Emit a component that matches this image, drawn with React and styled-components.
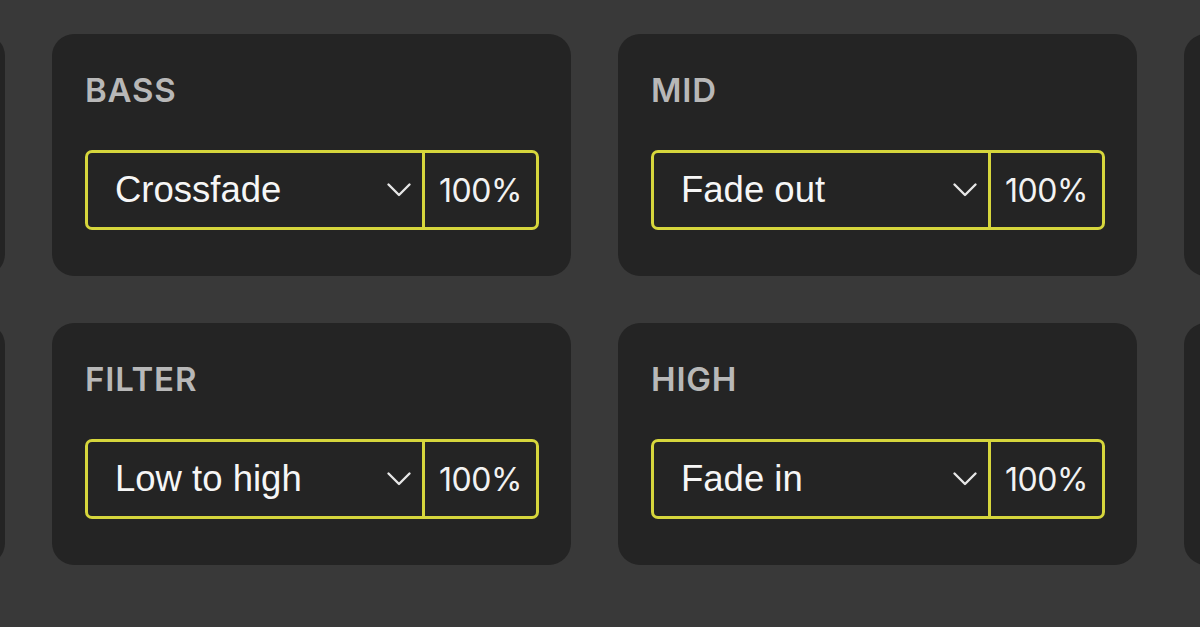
import React from "react";
import styled, { createGlobalStyle } from "styled-components";

const Global = createGlobalStyle`
  html, body { margin: 0; padding: 0; background: #393939; overflow: hidden; }
`;

const Viewport = styled.main`
  width: 1200px;
  height: 627px;
  overflow: hidden;
  background: #393939;
`;

const Grid = styled.div`
  display: grid;
  grid-template-columns: repeat(4, 519px);
  column-gap: 47px;
  row-gap: 47px;
  margin-left: -514px;
  padding-top: 34px;
`;

const Card = styled.section`
  background: #242424;
  border-radius: 22px;
  height: 242px;
  box-sizing: border-box;
  padding: 36px 32px 0 33px;
`;

const Label = styled.div`
  font-family: Inter, "Noto Sans", sans-serif;
  font-weight: 600;
  font-size: 33px;
  line-height: 40px;
  color: #b8b8b8;
  letter-spacing: 0.8px;
`;

const SelectBox = styled.div`
  margin-top: 40px;
  height: 80px;
  box-sizing: border-box;
  border: 3px solid #d6d63c;
  border-radius: 7px;
  display: flex;
  align-items: stretch;
`;

const Choice = styled.div`
  flex: 1;
  display: flex;
  align-items: center;
  padding: 0 10px 0 27px;
  border-right: 3px solid #d6d63c;
`;

const ChoiceText = styled.span`
  flex: 1;
  font-family: "Liberation Sans", Arial, sans-serif;
  font-size: 36.5px;
  color: #f6f6f6;
`;

const Chevron = styled.svg`
  width: 26px;
  height: 16px;
  display: block;
`;

const Amount = styled.div`
  width: 111px;
  display: flex;
  align-items: center;
  justify-content: center;
  font-family: Inter, "Noto Sans", sans-serif;
  font-size: 32px;
  font-weight: 400;
  color: #f2f2f2;
  letter-spacing: -0.5px;
`;

const cards = [
  null,
  { label: "BASS", value: "Crossfade" },
  { label: "MID", value: "Fade out" },
  null,
  null,
  { label: "FILTER", value: "Low to high" },
  { label: "HIGH", value: "Fade in" },
  null,
];

function Control({ label, value }) {
  return (
    <>
      <Label>{label}</Label>
      <SelectBox>
        <Choice>
          <ChoiceText>{value}</ChoiceText>
          <Chevron viewBox="0 0 26 16" fill="none">
            <path d="M2.5 2.5 L13 13 L23.5 2.5" stroke="#e6e6e6" strokeWidth="2.4" strokeLinecap="round" strokeLinejoin="round" />
          </Chevron>
        </Choice>
        <Amount>100%</Amount>
      </SelectBox>
    </>
  );
}

export default function App() {
  return (
    <>
      <Global />
      <Viewport>
        <Grid>
          {cards.map((c, i) => (
            <Card key={i}>{c && <Control {...c} />}</Card>
          ))}
        </Grid>
      </Viewport>
    </>
  );
}
